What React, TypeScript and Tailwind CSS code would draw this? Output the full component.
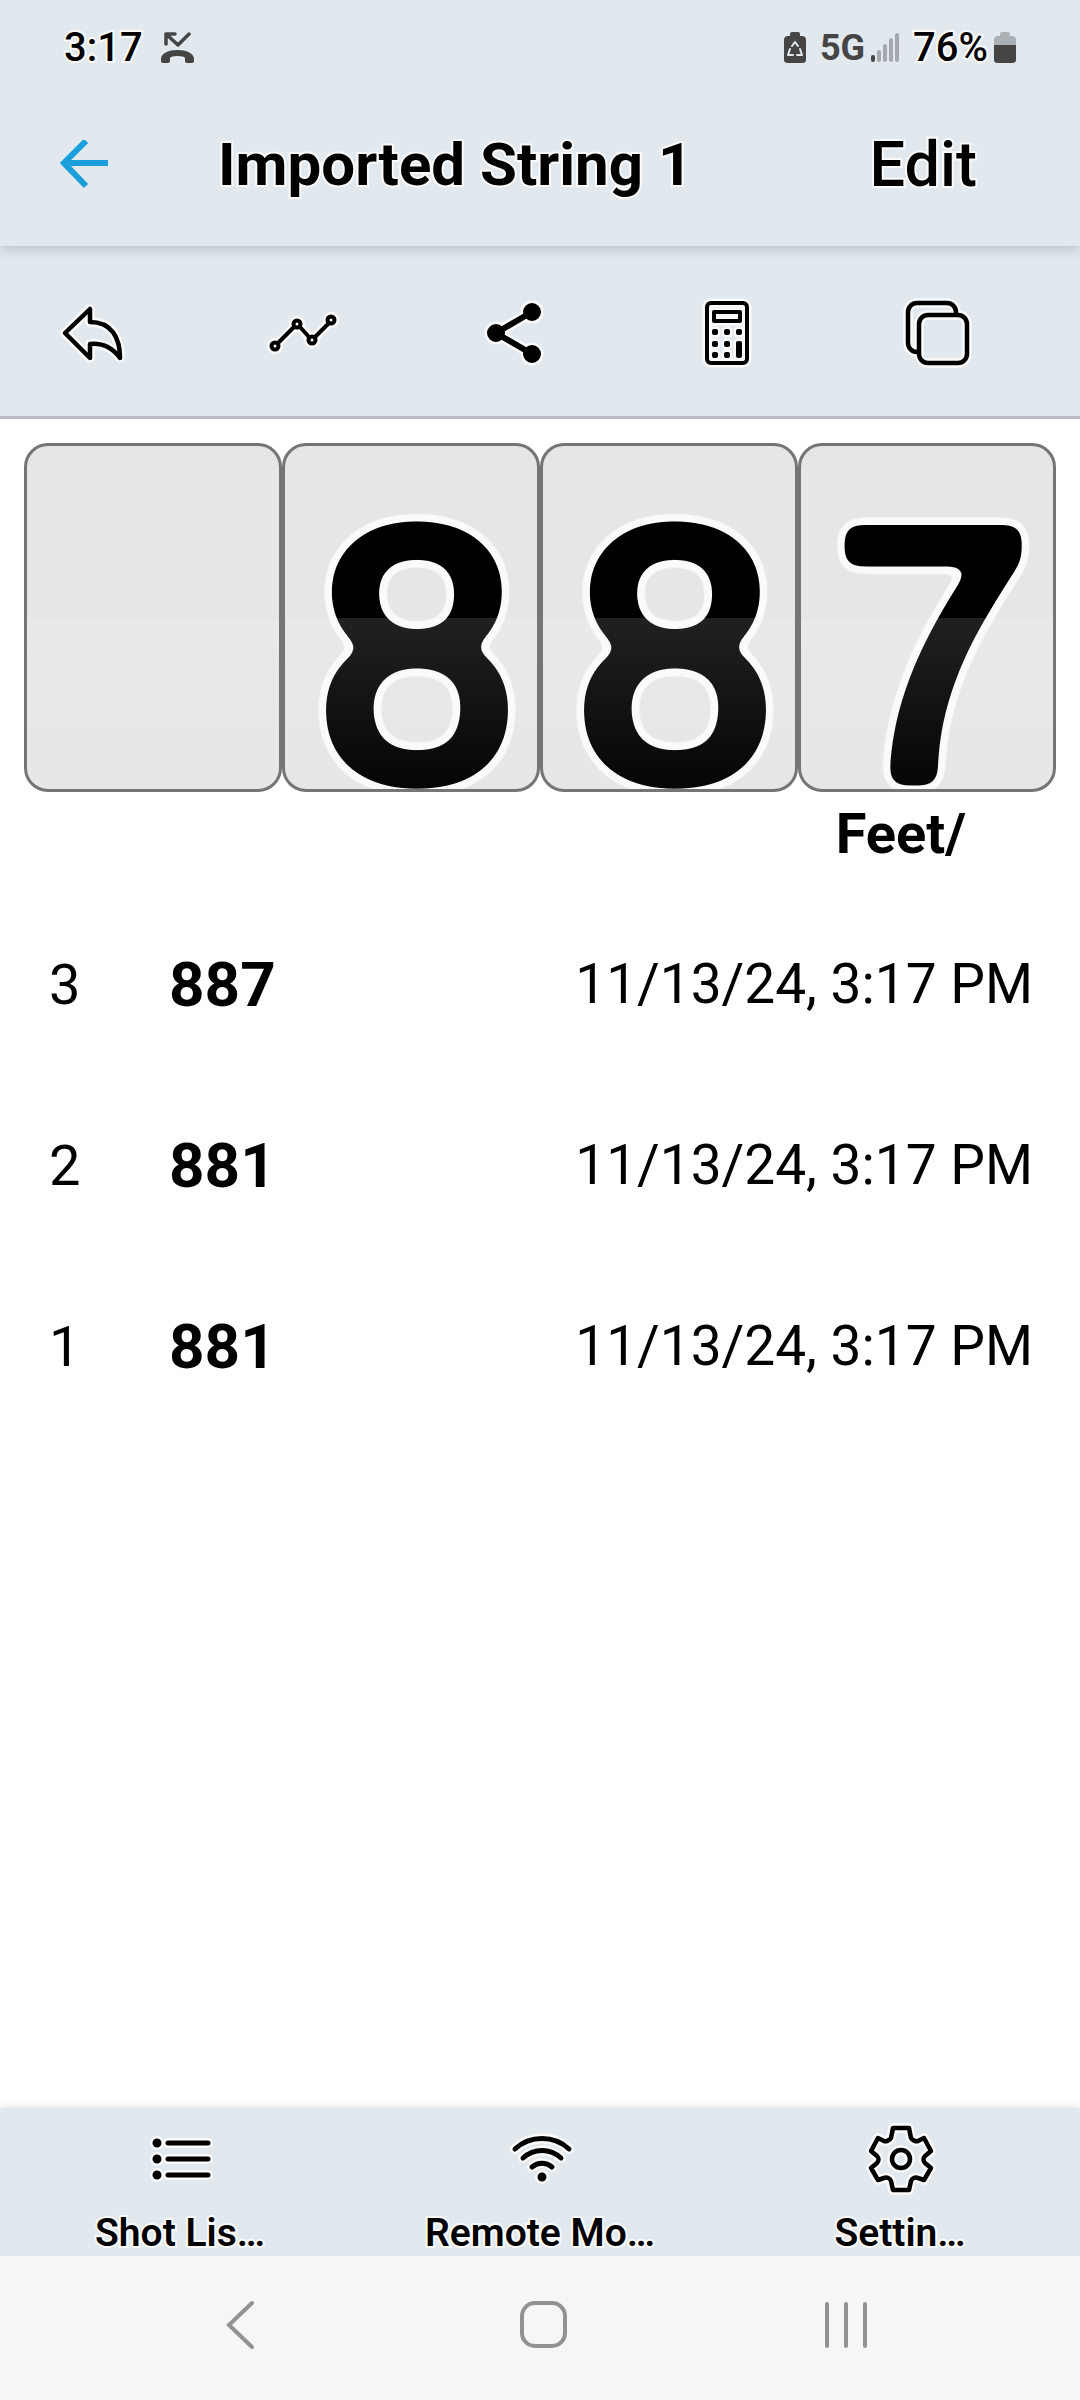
import type { ReactNode } from "react";

const halo = "[-webkit-text-stroke:4px_#fafafa] [paint-order:stroke_fill]";

/* Line icon drawn in black over a slightly wider pale outline. */
function Glyph({ w, h, stroke, children }: { w: number; h: number; stroke: number; children: ReactNode }) {
  return (
    <svg width={w} height={h} viewBox={`0 0 ${w} ${h}`} fill="none" strokeLinecap="round" strokeLinejoin="round" className="overflow-visible" aria-hidden="true">
      <g stroke="#fafafa" strokeWidth={stroke + 5}>{children}</g>
      <g stroke="#000" strokeWidth={stroke}>{children}</g>
    </svg>
  );
}

const UndoIcon = () => (
  <Glyph w={60} h={64} stroke={4.5}>
    <path d="M3 32 L28 8 V21 C49 21 58 36 58 57 C50 46 40 42 28 43 V57 Z" />
  </Glyph>
);
const ChartIcon = () => (
  <Glyph w={68} h={64} stroke={4}>
    <path d="M8 42 L24 26 M30 26 L39 36 M45 36 L59 22" />
    <circle cx="5" cy="45" r="3.5" />
    <circle cx="27" cy="23" r="3.5" />
    <circle cx="42" cy="39" r="3.5" />
    <circle cx="61" cy="19" r="3.5" />
  </Glyph>
);
const ShareIcon = () => (
  <Glyph w={56} h={64} stroke={6}>
    <path d="M45 11 L9 32 L45 53" />
    <circle cx="9" cy="32" r="6" fill="#000" />
    <circle cx="45" cy="11" r="6" fill="#000" />
    <circle cx="45" cy="53" r="6" fill="#000" />
  </Glyph>
);
const CalculatorIcon = () => (
  <Glyph w={46} h={66} stroke={4}>
    <rect x="3" y="3" width="40" height="60" rx="4" />
    <rect x="10" y="12" width="26" height="9" />
    {[[11, 32], [23, 32], [35, 32], [11, 44], [23, 44], [11, 55], [23, 55]].map(([x, y]) => (
      <path key={`${x}-${y}`} d={`M${x - 1} ${y - 1} h2 v2 h-2 Z`} fill="#000" />
    ))}
    <path d="M34 43 V56 M36 43 V56" />
  </Glyph>
);
const CopyIcon = () => (
  <Glyph w={66} h={66} stroke={4.5}>
    <path d="M51 14 V12 A9 9 0 0 0 42 3 H12 A9 9 0 0 0 3 12 V43 A9 9 0 0 0 12 52 H14" />
    <rect x="14" y="15" width="48" height="48" rx="9" />
  </Glyph>
);
const ListIcon = () => (
  <Glyph w={60} h={60} stroke={5}>
    <path d="M18 14 H58 M18 30 H58 M18 46 H58" />
    {[14, 30, 46].map((y) => <circle key={y} cx="7" cy={y} r="2" fill="#000" />)}
  </Glyph>
);
const WifiIcon = () => (
  <Glyph w={60} h={60} stroke={5}>
    <path d="M5 20 C20 6 44 6 59 20 M13 29 C24 19 40 19 51 29 M22 38 C28 33 36 33 42 38" />
    <circle cx="32" cy="48" r="2" fill="#000" />
  </Glyph>
);
const GearIcon = () => (
  <Glyph w={64} h={68} stroke={4.5}>
    <path d="M25 3 H41 L43 13 C44 15 48 17 50 16 L56 13 L63 26 L57 31 C55 33 55 36 57 38 L63 43 L56 55 L50 53 C47 52 44 53 43 56 L41 65 H25 L23 56 C22 53 19 52 16 53 L10 55 L3 43 L9 38 C11 36 11 33 9 31 L3 26 L10 13 L16 16 C18 17 22 15 23 13 Z" />
    <circle cx="33" cy="34" r="9" />
  </Glyph>
);

function StatusBar() {
  return (
    <div className="flex h-24 items-center justify-between px-16 text-[40px] leading-none">
      <div className="flex items-center gap-[18px]">
        <span className={`font-medium ${halo}`}>3:17</span>
        <svg width="33" height="32" viewBox="0 0 33 32" fill="none" role="img" aria-label="Missed call">
          <path d="M5 12 V2 H14 M5 2 L17 13 L28 2" stroke="#454545" strokeWidth="3.5" strokeLinecap="round" strokeLinejoin="round" />
          <path d="M0 29 C-1 22 6 18 16.5 18 C27 18 34 22 33 29 Q33 31 31 31 H26 Q24 31 24 29 V26 Q23 24 16.5 24 Q10 24 9 26 V29 Q9 31 7 31 H2 Q0 31 0 29 Z" fill="#454545" />
        </svg>
      </div>
      <div className="flex items-center">
        <svg width="22" height="32" viewBox="0 0 22 32" role="img" aria-label="Battery protection">
          <path d="M6 2 Q6 0 8 0 H14 Q16 0 16 2 V4 H18 Q22 4 22 8 V28 Q22 31 18 31 H4 Q0 31 0 28 V8 Q0 4 4 4 H6 Z" fill="#454545" />
          <path d="M8 14 L11 10 L14 14 M16 17 L18 23 H13 M9 23 H4 L6 17" fill="none" stroke="#e1e8ee" strokeWidth="2" strokeLinejoin="round" strokeLinecap="round" />
        </svg>
        <span className="pl-3.5 text-[36px] font-bold text-[#454545]">5G</span>
        <svg width="28" height="32" viewBox="0 0 28 32" className="ml-1.5" strokeWidth="4" strokeLinecap="round" role="img" aria-label="Signal">
          <path d="M2 25 V28" stroke="#454545" />
          <path d="M8 20 V28 M14 14 V28 M20 8 V28 M26 3 V28" stroke="#a5a9ad" />
        </svg>
        <span className={`pl-3.5 font-medium ${halo}`}>76%</span>
        <svg width="22" height="32" viewBox="0 0 22 32" className="ml-1.5" role="img" aria-label="Battery">
          <path d="M6 2 Q6 0 8 0 H14 Q16 0 16 2 V4 H18 Q22 4 22 8 V13 H0 V8 Q0 4 4 4 H6 Z" fill="#abb0b4" />
          <path d="M0 13 H22 V28 Q22 31 18 31 H4 Q0 31 0 28 Z" fill="#454545" />
        </svg>
      </div>
    </div>
  );
}

/* Softens the corners of a digit and lays a pale outline behind it. */
function DigitFilter() {
  return (
    <svg width="0" height="0" className="absolute" aria-hidden="true">
      <filter id="rounded-digit" filterUnits="userSpaceOnUse" x="0" y="0" width="252" height="360" colorInterpolationFilters="sRGB">
        <feGaussianBlur in="SourceAlpha" stdDeviation="8" />
        <feComponentTransfer result="body">
          <feFuncA type="linear" slope="20" intercept="-9.5" />
        </feComponentTransfer>
        <feGaussianBlur in="body" stdDeviation="5" />
        <feComponentTransfer result="spread">
          <feFuncA type="linear" slope="24" intercept="-0.6" />
        </feComponentTransfer>
        <feFlood floodColor="#fafafa" />
        <feComposite in2="spread" operator="in" result="outline" />
        <feMerge>
          <feMergeNode in="outline" />
          <feMergeNode in="body" />
        </feMerge>
      </filter>
    </svg>
  );
}

function Flap({ digit }: { digit: string }) {
  return (
    <div className="relative h-[349px] min-w-0 flex-1 overflow-hidden rounded-3xl border-3 border-[#757575] bg-[#e6e6e6]">
      {digit && (
        <svg viewBox="0 0 252 343" className="h-full w-full font-['Liberation_Sans',sans-serif] text-[357px]" strokeLinejoin="round">
          <text x="132" y="332" textAnchor="middle" fill="#000" stroke="#000" strokeWidth="15" filter="url(#rounded-digit)">{digit}</text>
        </svg>
      )}
      <div className="absolute inset-x-0 bottom-0 h-1/2 bg-linear-to-b from-white/13 to-white/2" />
    </div>
  );
}

const tools = [
  { label: "Undo", icon: <UndoIcon /> },
  { label: "Chart", icon: <ChartIcon /> },
  { label: "Share", icon: <ShareIcon /> },
  { label: "Calculator", icon: <CalculatorIcon /> },
  { label: "Copy", icon: <CopyIcon /> },
];

const shots = [
  { n: 3, speed: 887, time: "11/13/24, 3:17 PM" },
  { n: 2, speed: 881, time: "11/13/24, 3:17 PM" },
  { n: 1, speed: 881, time: "11/13/24, 3:17 PM" },
];

const tabs = [
  { label: "Shot Lis…", icon: <ListIcon /> },
  { label: "Remote Mo…", icon: <WifiIcon /> },
  { label: "Settin…", icon: <GearIcon /> },
];

export default function App() {
  return (
    <div className="flex min-h-screen flex-col bg-white font-[Roboto,sans-serif] text-black">
      <DigitFilter />
      <header className="relative bg-[#e1e8ee] shadow-[0_2px_12px_rgba(80,80,110,0.3)]">
        <StatusBar />
        <div className="flex h-[150px] items-center pb-3">
          <button aria-label="Back" className="ml-[60px] w-[158px]">
            <svg width="50" height="50" viewBox="0 0 50 50" fill="none" stroke="#1a9fdb" strokeWidth="6" aria-hidden="true">
              <path d="M26 1 L4 23 L26 46 M3 23 H48" />
            </svg>
          </button>
          <h1 className={`flex-1 text-[60px] font-bold leading-[72px] ${halo}`}>Imported String 1</h1>
          <button className={`pr-[103px] text-[63px] font-medium leading-[72px] ${halo}`}>Edit</button>
        </div>
      </header>
      <nav aria-label="String tools" className="flex h-[173px] items-center justify-between border-b-3 border-[#b8bcc2] bg-[#e1e8ee] pt-1 pl-[52px] pr-[102px]">
        {tools.map((t) => (
          <button key={t.label} aria-label={t.label} className="flex h-full w-20 items-center justify-center">{t.icon}</button>
        ))}
      </nav>
      <main className="flex-1">
        <div className="flex px-6 pt-6">
          {["", "8", "8", "7"].map((d, i) => <Flap key={i} digit={d} />)}
        </div>
        <p className="pr-[114px] pt-1.5 text-right text-[56px] font-bold leading-[72px]">Feet/</p>
        <table className="mt-6 w-full">
          <tbody>
            {shots.map((s) => (
              <tr key={s.n} className="h-[181px]">
                <td className="w-[169px] pl-[49px] text-[56px]">{s.n}</td>
                <td className="text-[62px] font-bold">{s.speed}</td>
                <td className="pr-[47px] text-right text-[55px]">{s.time}</td>
              </tr>
            ))}
          </tbody>
        </table>
      </main>
      <nav aria-label="Main" className="grid h-[148px] grid-cols-3 bg-[#e1e8ee] shadow-[0_-1px_8px_rgba(0,0,0,0.12)]">
        {tabs.map((t) => (
          <button key={t.label} className="flex flex-col items-center pt-4">
            <span className="flex h-[70px] items-center">{t.icon}</span>
            <span className={`pt-[15px] text-[39px] font-semibold leading-[48px] ${halo}`}>{t.label}</span>
          </button>
        ))}
      </nav>
      <div className="flex h-36 items-center justify-around bg-[#f6f6f6] pb-1.5 pl-[91px] pr-[83px]">
        <button aria-label="Back">
          <svg width="48" height="50" viewBox="0 0 48 50" fill="none" stroke="#929292" strokeWidth="4" strokeLinecap="round" aria-hidden="true">
            <path d="M34 3 L11 25 L34 47" />
          </svg>
        </button>
        <button aria-label="Home">
          <svg width="48" height="48" viewBox="0 0 48 48" fill="none" stroke="#929292" strokeWidth="4" aria-hidden="true">
            <rect x="2" y="2" width="43" height="43" rx="13" />
          </svg>
        </button>
        <button aria-label="Recent apps">
          <svg width="48" height="48" viewBox="0 0 48 48" fill="none" stroke="#929292" strokeWidth="4" strokeLinecap="round" aria-hidden="true">
            <path d="M5 3 V45 M24 3 V45 M43 3 V45" />
          </svg>
        </button>
      </div>
    </div>
  );
}
